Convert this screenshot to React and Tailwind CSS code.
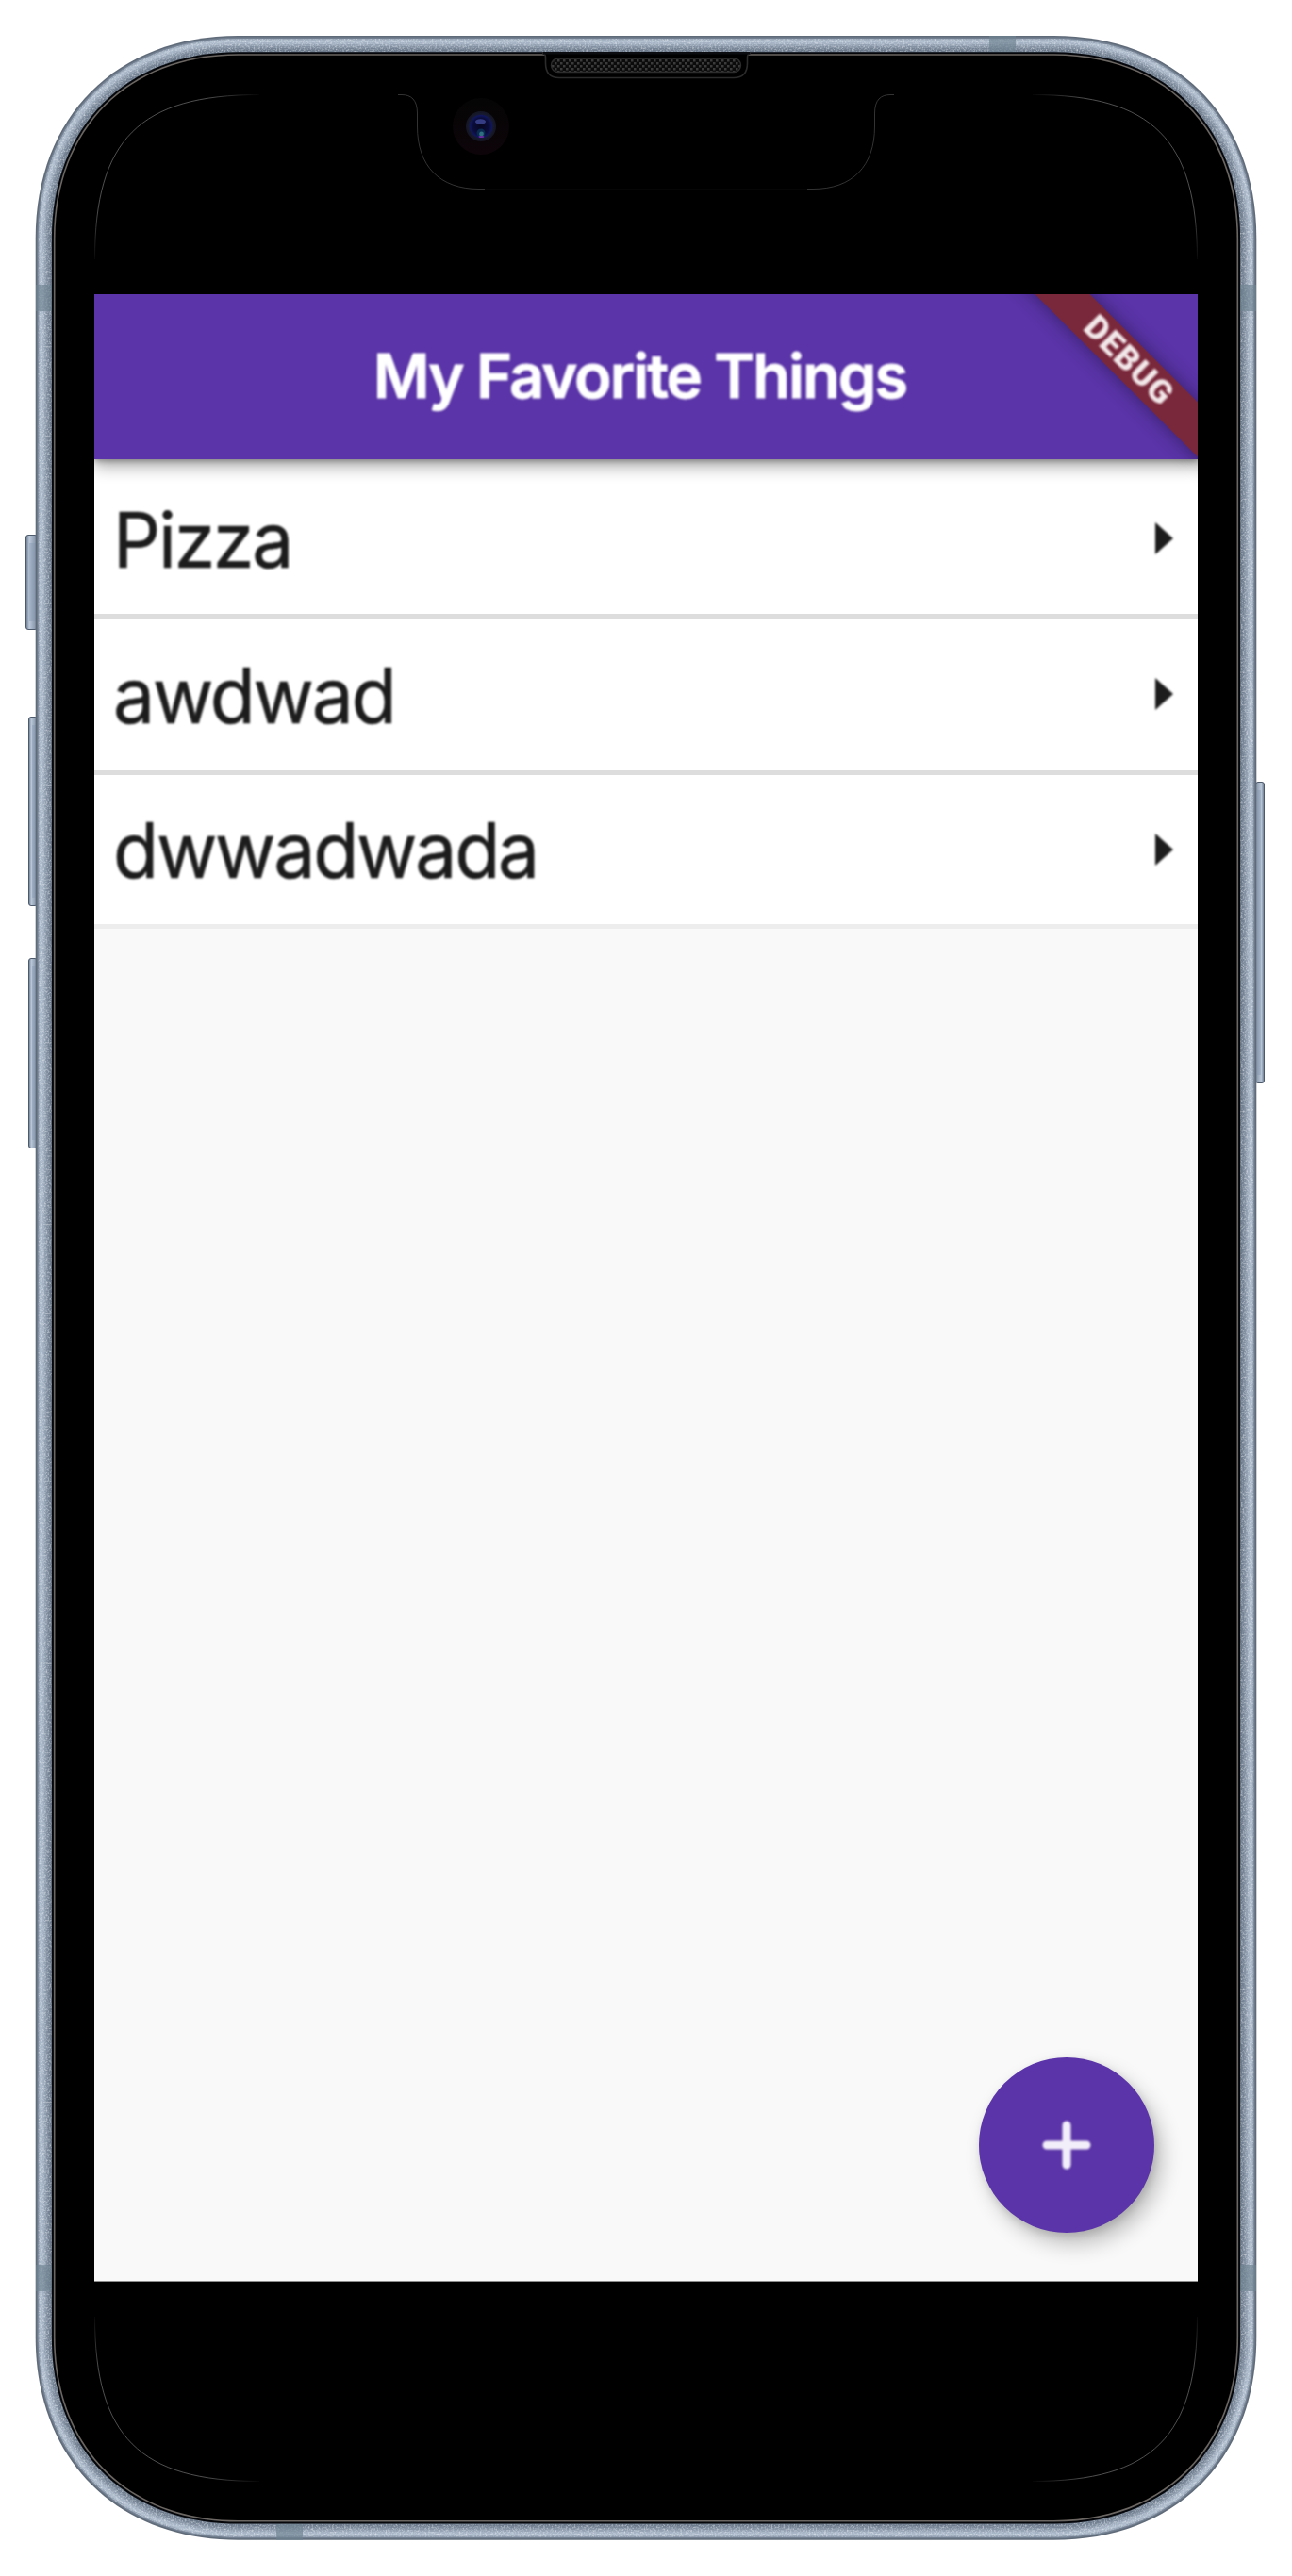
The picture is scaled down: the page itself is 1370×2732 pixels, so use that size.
import React from "react";

// Outline of a rectangle with smooth corners; c is the corner extent, k the handle distance.
function outline(x0, y0, x1, y1, c, k) {
  return `M${x0} ${y0 + c}C${x0} ${y0 + k} ${x0 + k} ${y0} ${x0 + c} ${y0}H${x1 - c}C${x1 - k} ${y0} ${x1} ${y0 + k} ${x1} ${y0 + c}V${y1 - c}C${x1} ${y1 - k} ${x1 - k} ${y1} ${x1 - c} ${y1}H${x0 + c}C${x0 + k} ${y1} ${x0} ${y1 - k} ${x0} ${y1 - c}Z`;
}

function body(inset) {
  return outline(37.7 + inset, 38 + inset, 1332.3 - inset, 2693.8 - inset, 215 - inset, 85.7 - inset * 0.4);
}

// Metal tones from the outer edge inwards.
const METAL = [
  [0, "#606b79"],
  [1.6, "#738092"],
  [3, "#98a6b7"],
  [4.5, "#aebccc"],
  [7, "#a4b2c3"],
  [9, "#93a1b2"],
  [11, "#8391a2"],
  [13, "#758394"],
  [15, "#6b798a"],
  [17.2, "#05070b"],
  [19.2, "#6b6662"],
  [20.8, "#000000"],
];

const BUTTONS = [
  [27, 567, 12, 101],
  [30, 760, 9, 201],
  [30, 1016, 9, 202],
  [1331, 829, 9, 320],
];

const BANDS = [
  [38, 302, 17, 28],
  [1315, 302, 17, 28],
  [38, 2402, 17, 28],
  [1315, 2402, 17, 28],
  [1049, 38, 28, 17],
  [293, 2677, 28, 17],
];

const CORNERS = [
  ["cornerA", 140, 142, "M100.500 275C100.500 148 148 100.500 275 100.500"],
  ["cornerB", 1230, 142, "M1269.500 275C1269.500 148 1222 100.500 1095 100.500"],
  ["cornerC", 140, 2590, "M100.500 2457C100.500 2584 148 2631.500 275 2631.500"],
  ["cornerD", 1230, 2590, "M1269.500 2457C1269.500 2584 1222 2631.500 1095 2631.500"],
];

function Device() {
  return (
    <svg className="absolute inset-0" width="1370" height="2732" viewBox="0 0 1370 2732" fill="none" aria-hidden="true">
      <defs>
        <filter id="grain" x="0" y="0" width="100%" height="100%">
          <feTurbulence type="fractalNoise" baseFrequency="0.55" numOctaves="2" seed="4" />
          <feColorMatrix type="matrix" values="0 0 0 0 .94  0 0 0 0 .97  0 0 0 0 1  2.4 0 0 0 -1.05" />
          <feComposite in2="SourceGraphic" operator="in" />
        </filter>
        <linearGradient id="button" x1="0" x2="1" y1="0" y2="0">
          <stop offset="0" stopColor="#66758a" />
          <stop offset=".3" stopColor="#bac8d9" />
          <stop offset=".7" stopColor="#94a3b7" />
          <stop offset="1" stopColor="#7f8da1" />
        </linearGradient>
        <linearGradient id="buttonRight" x1="1" x2="0" y1="0" y2="0">
          <stop offset="0" stopColor="#66758a" />
          <stop offset=".35" stopColor="#bac8d9" />
          <stop offset="1" stopColor="#8290a4" />
        </linearGradient>
        {CORNERS.map(([id, cx, cy]) => (
          <radialGradient key={id} id={id} gradientUnits="userSpaceOnUse" cx={cx} cy={cy} r="145">
            <stop offset=".6" stopColor="#585858" />
            <stop offset="1" stopColor="#585858" stopOpacity="0" />
          </radialGradient>
        ))}
        <radialGradient id="lens">
          <stop offset="0" stopColor="#07071f" />
          <stop offset=".55" stopColor="#0b0d3c" />
          <stop offset=".72" stopColor="#10165c" />
          <stop offset=".8" stopColor="#17192f" />
          <stop offset="1" stopColor="#141622" />
        </radialGradient>
        <linearGradient id="halo" x1="0" x2="0" y1="0" y2="1">
          <stop offset="0" stopColor="#050505" />
          <stop offset="1" stopColor="#0d0409" />
        </linearGradient>
        <pattern id="mesh" width="6" height="6" patternUnits="userSpaceOnUse">
          <rect width="6" height="6" fill="#0b0b0b" />
          <rect width="2.5" height="2.5" fill="#3b3b3b" />
          <rect x="3" y="3" width="2.5" height="2.5" fill="#3b3b3b" />
        </pattern>
      </defs>

      {BUTTONS.map(([x, y, w, h]) => (
        <g key={`${x}-${y}`}>
          <rect x={x + 0.5} y={y + 0.5} width={w} height={h - 1} rx="2.5" fill={x > 600 ? "url(#buttonRight)" : "url(#button)"} stroke="#4d5a6b" />
          <rect x={x + (x > 600 ? 2 : 4)} y={y + 9} width={w - 5} height={h - 18} fill="#8191a8" fillOpacity=".35" />
        </g>
      ))}

      {METAL.slice(0, 9).map(([inset, color]) => (
        <path key={inset} d={body(inset)} fill={color} />
      ))}
      <path d={`${body(3)}${body(17)}`} fillRule="evenodd" fill="#fff" filter="url(#grain)" opacity=".5" />
      {BANDS.map(([x, y, w, h]) => (
        <rect key={`${x}-${y}`} x={x} y={y} width={w} height={h} fill="#6f8290" fillOpacity=".65" />
      ))}
      {METAL.slice(9).map(([inset, color]) => (
        <path key={inset} d={body(inset)} fill={color} />
      ))}

      {/* Display edge */}
      {CORNERS.map(([id, , , d]) => (
        <path key={id} d={d} stroke={`url(#${id})`} strokeWidth=".9" />
      ))}
      <g stroke="#404040" strokeWidth=".8">
        <path d="M422 100.5H426C436 100.5 442.5 106 442.5 120V134C442.5 176 466 200.5 508 200.5H514" />
        <path d="M948 100.5H944C934 100.5 927.5 106 927.5 120V134C927.5 176 904 200.5 862 200.5H856" />
        <path d="M514 201H856" strokeOpacity=".25" />
      </g>

      {/* Earpiece */}
      <path d="M576 56V57Q578.500 57 578.500 61V67Q578.500 82.500 593 82.500H778Q792.500 82.500 792.500 67V61Q792.500 57 795 57V56Z" fill="#000" stroke="#2b2b2b" strokeWidth="1.6" />
      <rect x="576" y="55" width="219" height="2.500" fill="#0a0c10" />
      <rect x="584.500" y="62" width="201" height="14.500" rx="7.200" fill="url(#mesh)" stroke="#2c2c2c" strokeWidth="1.4" />

      {/* Camera */}
      <circle cx="510" cy="134" r="30" fill="url(#halo)" />
      <circle cx="510" cy="134" r="16" fill="url(#lens)" />
      <ellipse cx="509.500" cy="129" rx="5.5" ry="2.8" fill="#4d58b0" opacity=".65" />
      <circle cx="510" cy="141" r="4.5" fill="#0a2a50" />
      <circle cx="510.500" cy="142" r="2.400" fill="#2f7080" />
      <ellipse cx="510.500" cy="145" rx="3" ry="1" fill="#6c2aa0" />
    </svg>
  );
}

function Row({ label }) {
  return (
    <li className="flex h-[165.5px] items-center justify-between border-b-[5px] border-[#dddddd] bg-white pl-[20px] pr-[26px] last:h-[163px] last:border-[#ededed]">
      <span className="origin-left scale-x-[0.965] pt-[3px] text-[81.5px] leading-none tracking-[-2.3px] text-[#1c1c1c] blur-[0.9px] [-webkit-text-stroke:0.6px_#1c1c1c]">{label}</span>
      <svg className="blur-[0.8px]" width="19" height="34" viewBox="0 0 19 34" aria-hidden="true">
        <path d="M0 0L19 17L0 34Z" fill="#1c1c1c" />
      </svg>
    </li>
  );
}

export default function App() {
  return (
    <div className="relative h-[2732px] w-[1370px] overflow-hidden bg-white px-[100px] pt-[312px] font-['Inter',sans-serif]">
      <Device />
      <main className="relative flex h-[2108px] w-[1170px] flex-col overflow-hidden border-b border-[#8c8c8c] bg-[#f9f9f9]">
        <header className="relative z-10 flex h-[175px] shrink-0 items-center justify-center bg-[#5a34a8] pb-[2px] pr-[13px] shadow-[0_8px_16px_rgba(0,0,0,0.32),0_2px_6px_rgba(0,0,0,0.3)]">
          <h1 className="whitespace-nowrap text-[65px] font-semibold leading-none tracking-[-2px] text-white blur-[0.8px] [-webkit-text-stroke:0.9px_white]">My Favorite Things</h1>
        </header>
        <ul className="shrink-0 bg-white pt-[3.5px]">
          <Row label="Pizza" />
          <Row label="awdwad" />
          <Row label="dwwadwada" />
        </ul>
        <button aria-label="Add" className="mb-[51.5px] mr-[46px] mt-auto flex size-[186px] shrink-0 items-center justify-center self-end rounded-full bg-[#5a34a8] shadow-[8px_12px_22px_rgba(0,0,0,0.24),2px_4px_8px_rgba(0,0,0,0.12)]">
          <svg className="blur-[1.2px]" width="54" height="54" viewBox="0 0 54 54" fill="none" stroke="#f3effa" strokeWidth="9" strokeLinecap="round" aria-hidden="true">
            <path d="M6 27H48M27 6V48" />
          </svg>
        </button>
        <div className="absolute left-[897px] top-[50px] z-20 flex h-[41px] w-[400px] rotate-45 items-center justify-center bg-[#79273a] shadow-[0_0_20px_rgba(0,0,0,0.4)]">
          <span className="font-['Roboto',sans-serif] text-[35px] font-black leading-none tracking-[1.2px] text-[#f3e8ea] blur-[0.8px]">DEBUG</span>
        </div>
      </main>
    </div>
  );
}
